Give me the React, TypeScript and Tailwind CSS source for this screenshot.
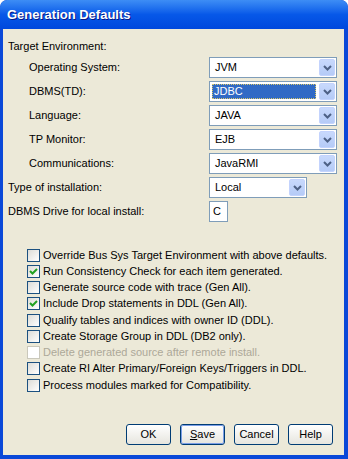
import React from 'react';

const font = { fontFamily: '"Liberation Sans", Arial, sans-serif' };

const Chevron: React.FC = () => (
    <svg width="9" height="6" viewBox="0 0 9 6" className="block">
        <polyline points="1,1 4.5,4.5 8,1" fill="none" stroke="#4D6185" strokeWidth="2" />
    </svg>
);

interface ComboProps {
    value: string;
    selected?: boolean;
    wide?: boolean;
}

const Combo: React.FC<ComboProps> = ({ value, selected, wide = true }) => (
    <div className={`flex h-[21px] border border-[#7F9DB9] bg-white ${wide ? 'w-[128px]' : 'w-[98px]'}`}>
        <div className="flex flex-1 items-center p-[2px]">
            {selected ? (
                <div className="flex h-full flex-1 items-center border border-dotted border-[#D9C86A] bg-[#316AC5] pl-[1px] text-white">
                    {value}
                </div>
            ) : (
                <span className="pl-[3px] text-black">{value}</span>
            )}
        </div>
        <div className="m-[1px] flex w-[16px] items-center justify-center rounded-[2px] border border-[#C3D3FD] bg-gradient-to-b from-[#C8D9FC] to-[#B5CBF7]">
            <Chevron />
        </div>
    </div>
);

const FieldRow: React.FC<{ label: string; indent?: boolean; children: React.ReactNode }> = ({ label, indent, children }) => (
    <div className="flex h-[21px] items-center">
        <div className={`w-[206px] ${indent ? 'pl-[26px]' : 'pl-[5px]'}`}>{label}</div>
        {children}
    </div>
);

interface CheckProps {
    label: string;
    checked?: boolean;
    disabled?: boolean;
}

const Check: React.FC<CheckProps> = ({ label, checked, disabled }) => (
    <div className="flex h-[16.25px] items-center">
        <div
            className={`flex h-[13px] w-[13px] items-center justify-center border ${
                disabled ? 'border-[#CAC8BB] bg-white' : 'border-[#1C5180] bg-gradient-to-br from-[#DCDCD7] to-white'
            }`}
        >
            {checked && (
                <svg width="9" height="9" viewBox="0 0 9 9" className="block">
                    <polyline points="1,4 3.5,6.5 8,2" fill="none" stroke="#21A121" strokeWidth="2" />
                </svg>
            )}
        </div>
        <span className={`ml-[3px] ${disabled ? 'text-[#ACA899]' : 'text-black'}`}>{label}</span>
    </div>
);

const Button: React.FC<{ children: React.ReactNode; focused?: boolean }> = ({ children, focused }) => (
    <div className="flex h-[21px] w-[45px] rounded-[3px] border border-[#003C74] bg-gradient-to-b from-white to-[#E6E5DE]">
        <div
            className={`flex flex-1 items-center justify-center rounded-[2px] ${
                focused ? 'border border-[#7B9EE6]' : ''
            }`}
        >
            {children}
        </div>
    </div>
);

export default function App() {
    return (
        <div className="flex h-[459px] w-[348px] flex-col overflow-hidden rounded-t-[7px] bg-[#0A48D8] text-[11px] leading-[13px]" style={font}>
            {/* title bar */}
            <div className="flex h-[29px] items-center rounded-t-[7px] bg-gradient-to-b from-[#3D8DF5] via-[#0758E8] to-[#0048DD] pl-[7px]">
                <span className="text-[13px] font-bold text-white [text-shadow:1px_1px_#0A1883]">Generation Defaults</span>
            </div>

            <div className="mb-[4px] ml-[3px] mr-[4px] flex flex-1 flex-col bg-[#ECE9D8] pt-[11px] text-black">
                <div className="pl-[5px]">Target Environment:</div>

                <div className="mt-[4px] flex flex-col gap-[3px]">
                    <FieldRow label="Operating System:" indent>
                        <Combo value="JVM" />
                    </FieldRow>
                    <FieldRow label="DBMS(TD):" indent>
                        <Combo value="JDBC" selected />
                    </FieldRow>
                    <FieldRow label="Language:" indent>
                        <Combo value="JAVA" />
                    </FieldRow>
                    <FieldRow label="TP Monitor:" indent>
                        <Combo value="EJB" />
                    </FieldRow>
                    <FieldRow label="Communications:" indent>
                        <Combo value="JavaRMI" />
                    </FieldRow>
                    <FieldRow label="Type of installation:">
                        <Combo value="Local" wide={false} />
                    </FieldRow>
                    <FieldRow label="DBMS Drive for local install:">
                        <div className="flex h-[21px] w-[19px] items-center border border-[#7F9DB9] bg-white pl-[3px]">C</div>
                    </FieldRow>
                </div>

                <div className="mt-[25px] flex flex-col pl-[24px]">
                    <Check label="Override Bus Sys Target Environment with above defaults." />
                    <Check label="Run Consistency Check for each item generated." checked />
                    <Check label="Generate source code with trace (Gen All)." />
                    <Check label="Include Drop statements in DDL (Gen All)." checked />
                    <Check label="Qualify tables and indices with owner ID (DDL)." />
                    <Check label="Create Storage Group in DDL (DB2 only)." />
                    <Check label="Delete generated source after remote install." disabled />
                    <Check label="Create RI Alter Primary/Foreign Keys/Triggers in DDL." />
                    <Check label="Process modules marked for Compatibility." />
                </div>

                <div className="mt-auto mb-[10px] flex justify-end gap-[9px] pr-[11px]">
                    <Button>OK</Button>
                    <Button focused>
                        <span>
                            <span className="underline">S</span>ave
                        </span>
                    </Button>
                    <Button>Cancel</Button>
                    <Button>Help</Button>
                </div>
            </div>
        </div>
    );
}
